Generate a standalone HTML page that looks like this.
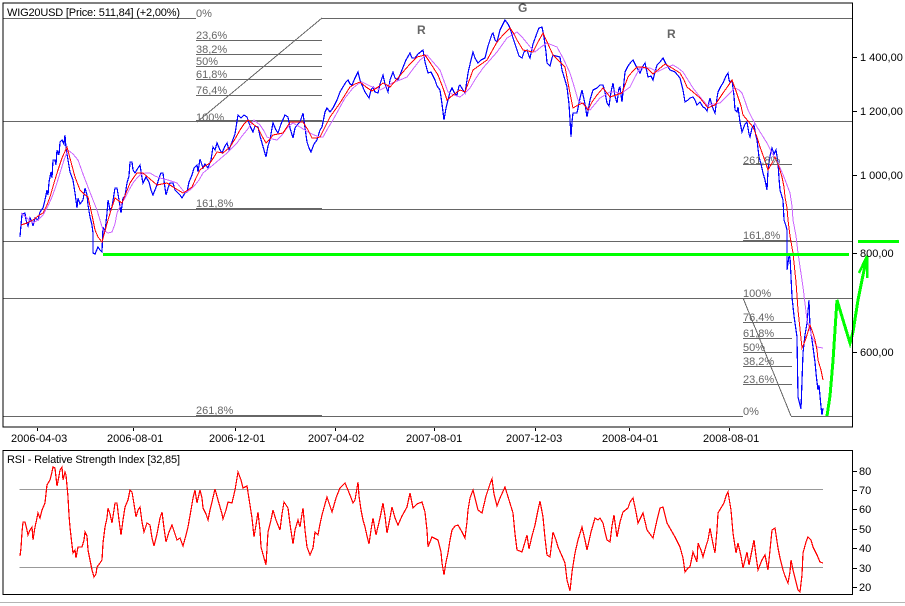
<!DOCTYPE html>
<html><head><meta charset="utf-8"><title>WIG20USD</title>
<style>
html,body{margin:0;padding:0;background:#fff;width:905px;height:606px;overflow:hidden}
svg{display:block}
text{font-family:"Liberation Sans",Arial,sans-serif;font-size:11px;fill:#000}
.f text{fill:#666}
.l line{stroke:#666;stroke-width:1}
.t line{stroke:#000;stroke-width:1}
polyline{fill:none}
</style></head><body>
<svg width="905" height="606" viewBox="0 0 905 606" xmlns="http://www.w3.org/2000/svg">
<g shape-rendering="crispEdges">
<g class="l">
<line x1="3" y1="18.5" x2="196" y2="18.5"/><line x1="322" y1="18.5" x2="852" y2="18.5"/>
<line x1="196" y1="40.5" x2="322" y2="40.5"/><line x1="196" y1="54.5" x2="322" y2="54.5"/>
<line x1="196" y1="66.5" x2="322" y2="66.5"/><line x1="196" y1="79.5" x2="322" y2="79.5"/>
<line x1="196" y1="95.5" x2="322" y2="95.5"/>
<line x1="3" y1="121.5" x2="852" y2="121.5"/>
<line x1="743" y1="164.5" x2="792" y2="164.5"/>
<line x1="3" y1="209.5" x2="852" y2="209.5"/>
<line x1="3" y1="241.5" x2="852" y2="241.5"/>
<line x1="3" y1="298.5" x2="852" y2="298.5"/>
<line x1="743" y1="322.5" x2="792" y2="322.5"/><line x1="743" y1="338.5" x2="792" y2="338.5"/>
<line x1="743" y1="352.5" x2="792" y2="352.5"/><line x1="743" y1="366.5" x2="792" y2="366.5"/>
<line x1="743" y1="384.5" x2="792" y2="384.5"/>
<line x1="3" y1="416.5" x2="196" y2="416.5"/><line x1="196" y1="416.5" x2="743" y2="416.5"/><line x1="791" y1="416.5" x2="852" y2="416.5"/>
</g>
<rect x="196" y="208" width="126" height="2" fill="#666"/>
<rect x="196" y="120" width="126" height="2" fill="#666"/>
<rect x="196" y="415" width="126" height="2" fill="#666"/>
<rect x="743" y="240" width="48" height="2" fill="#666"/>
</g>
<line x1="322" y1="18" x2="197" y2="122" stroke="#666" shape-rendering="crispEdges"/>
<line x1="743" y1="298" x2="791" y2="416" stroke="#666" shape-rendering="crispEdges"/>

<polyline shape-rendering="crispEdges" stroke="#0000ff" stroke-width="1.2" points="20,237 21,225 22,214 25,213 26,220 28,226 30,218 32,222 33,226 35,218 38,220 40,212 43,208 45,200 47,190 48,195 49,182 51,172 52,178 53,160 55,160 56,165 57,150 59,155 60,142 62,140 64,144 65,135 66,148 68,160 70,172 73,180 75,193 77,208 78,198 80,204 83,200 85,188 87,195 88,205 90,217 92,225 93,233 93,253 95,254 98,247 100,250 102,252 103,227 105,232 107,213 108,200 110,210 112,207 115,188 117,188 119,200 121,213 123,198 125,196 127,183 129,176 130,162 132,162 133,170 135,173 138,168 140,165 142,178 143,183 146,177 149,182 151,190 153,195 155,190 157,185 159,178 161,173 163,173 165,188 166,195 168,188 170,183 173,183 175,190 177,192 180,195 182,198 185,193 187,192 189,182 192,175 194,168 197,165 198,172 200,159 203,168 205,164 208,168 211,160 213,147 215,150 217,143 220,150 222,153 225,146 227,143 229,150 232,142 235,134 238,115 241,118 244,115 247,117 250,126 253,132 255,126 258,127 260,136 262,143 264,150 266,157 268,146 270,140 272,128 273,123 276,130 278,133 281,124 285,115 288,117 290,128 293,138 295,128 297,125 300,122 303,113 305,128 307,142 309,148 311,152 314,144 317,140 320,130 322,127 325,112 327,108 330,112 333,108 335,104 337,100 340,92 343,87 346,82 348,80 350,84 352,85 355,78 358,72 360,80 362,85 365,92 369,98 371,90 373,87 375,92 378,93 380,84 383,75 385,84 388,92 390,80 393,72 395,78 398,80 402,70 406,60 410,53 412,58 415,58 418,54 423,50 425,62 428,73 431,72 435,80 437,86 440,90 442,104 444,120 446,108 448,100 450,92 452,88 455,94 457,95 459,86 460,85 463,90 465,93 467,80 468,73 471,60 473,52 475,58 478,63 481,60 485,58 488,46 490,40 492,34 493,33 495,40 497,42 500,30 505,20 508,24 510,28 513,38 517,50 519,56 522,58 524,52 527,50 529,56 530,58 533,44 537,33 539,28 542,27 544,37 546,52 547,63 550,66 552,58 553,55 556,56 560,57 562,70 565,80 567,87 569,104 570,120 571,137 572,122 573,113 577,113 580,98 582,90 585,104 587,117 590,100 593,90 597,88 600,85 603,85 605,92 607,103 609,106 611,92 613,83 615,96 617,103 619,88 620,87 622,102 624,82 625,72 628,66 631,62 633,60 636,66 640,73 643,66 645,63 648,77 651,76 653,80 655,72 657,65 660,62 663,58 666,64 670,70 675,72 680,78 683,90 685,102 688,100 690,98 693,97 695,100 697,105 700,102 703,107 705,108 707,111 709,102 710,98 712,106 715,113 717,98 718,92 721,86 723,83 726,76 728,73 729,80 730,82 732,80 734,96 735,110 737,112 738,107 740,122 742,132 745,124 747,122 749,134 750,137 752,128 754,125 756,136 757,140 759,157 761,164 763,173 765,180 767,190 768,170 770,156 772,148 774,154 776,150 778,163 779,178 780,190 783,200 784,220 786,226 787,230 787,270 789,256 790,257 792,297 794,316 797,337 798,397 800,405 801,409 803,353 805,335 807,323 809,300 810,327 812,340 813,347 815,362 816,373 817,382 818,390 819,385 821,407 822,415 823,408"/>

<polyline shape-rendering="crispEdges" stroke="#cc66ff" stroke-width="1" points="21,213 27,218 33,223 38,220 43,215 48,206 52,197 56,186 60,173 64,160 68,150 73,154 78,160 83,174 88,187 93,200 97,210 100,220 103,230 108,233 112,232 115,224 117,213 121,204 125,198 129,190 133,183 137,178 140,175 145,173 150,173 155,176 160,178 168,180 177,183 181,188 185,193 190,190 195,185 199,180 203,173 208,169 213,165 220,159 227,153 232,148 237,143 242,136 247,130 254,120 260,125 264,131 267,137 272,139 277,140 282,135 287,128 290,125 293,123 300,127 308,132 314,135 320,137 323,137 328,128 333,120 339,109 345,98 349,93 353,88 358,84 362,82 370,86 380,90 386,87 392,83 400,80 407,77 413,69 420,60 424,57 427,55 433,62 440,70 444,81 448,92 454,95 460,97 465,93 470,88 476,78 483,68 490,60 497,52 502,45 507,38 512,35 517,32 522,37 527,43 531,48 535,52 541,47 547,43 552,45 557,47 563,58 570,73 574,86 578,100 584,105 590,110 595,104 600,98 605,95 610,92 615,92 620,93 622,93 626,90 630,87 635,77 640,68 645,68 650,68 654,70 657,72 665,68 673,65 678,68 683,72 688,80 693,88 700,97 707,105 714,104 720,103 727,96 735,88 739,90 742,93 745,101 748,110 752,118 757,127 762,135 767,143 772,153 778,163 784,177 790,193 792,206 793,220 796,236 798,253 803,287 807,320 810,330 812,337 815,343 817,347 823,348"/>

<polyline shape-rendering="crispEdges" stroke="#ff0000" stroke-width="1" points="21,225 27,223 33,220 38,216 43,213 47,205 50,197 54,183 58,170 62,158 67,147 71,162 75,177 80,190 84,194 88,197 92,215 95,230 98,237 102,242 105,231 108,220 112,207 115,198 119,201 122,203 126,193 130,183 134,177 137,173 143,173 150,179 157,185 162,184 167,183 173,187 178,190 183,193 188,190 192,187 196,178 200,170 205,166 210,163 214,157 217,152 223,153 230,147 235,139 240,130 244,124 248,120 253,124 258,128 262,136 266,143 270,139 273,135 278,134 283,133 287,127 290,122 296,122 303,122 308,130 312,138 316,138 320,137 325,127 330,117 335,110 340,103 345,95 350,87 355,84 360,82 366,87 372,91 378,87 383,83 387,85 390,87 397,79 403,72 410,64 417,57 421,56 425,55 431,64 438,75 443,88 447,100 453,95 460,90 465,92 469,81 473,70 480,65 487,60 492,51 497,42 503,35 510,28 514,34 517,40 520,45 523,50 528,51 533,52 538,42 543,33 548,44 553,55 559,61 565,67 569,88 573,108 578,105 583,103 588,110 592,102 597,95 603,88 607,93 610,97 616,95 622,93 625,85 628,77 632,72 637,67 642,67 647,68 650,71 653,74 659,69 665,64 672,68 680,73 684,80 687,87 693,92 700,98 704,103 708,108 712,106 715,105 719,99 723,93 728,86 732,80 735,88 738,97 741,106 743,115 748,121 753,127 757,137 760,147 764,158 768,170 772,163 775,157 779,167 782,177 784,187 785,197 787,208 788,220 790,236 793,253 796,282 798,310 800,329 802,348 805,341 807,335 810,325 813,333 815,340 817,350 818,360 821,370 823,380"/>

<polyline shape-rendering="crispEdges" stroke="#00ff00" stroke-width="3" points="103,254.5 849,254.5"/>
<polyline shape-rendering="crispEdges" stroke="#00ff00" stroke-width="3" points="858,241.5 899,241.5"/>
<polyline shape-rendering="crispEdges" stroke="#00ff00" stroke-width="3" points="827,416 830,396 833,361 835,330 837,300 843,320 850,343 853,332 858,300 862,280 867,256"/>
<polyline shape-rendering="crispEdges" stroke="#00ff00" stroke-width="2.5" points="859,273 867,256 867,278"/>

<polyline shape-rendering="crispEdges" points="19.5,489.5 823,489.5" stroke="#999"/>
<polyline shape-rendering="crispEdges" points="19.5,567.5 823,567.5" stroke="#999"/>
<polyline shape-rendering="crispEdges" stroke="#ff0000" stroke-width="1.2" points="20,556 21,548 22,532 23,522 25,522 27,530 28,535 30,530 32,527 33,540 35,527 37,518 38,513 40,518 42,510 45,503 47,485 50,480 52,472 53,467 55,468 57,486 59,476 60,470 62,467 63,480 65,472 66,475 68,497 69,515 70,527 72,545 73,553 75,550 76,558 78,547 82,547 84,540 85,532 87,536 88,550 90,560 92,570 94,577 96,574 97,567 100,563 102,560 103,543 105,527 107,518 108,508 110,514 112,523 114,510 115,503 117,503 119,520 121,535 123,520 125,507 128,500 130,490 132,492 134,504 136,517 138,510 140,507 142,522 144,532 147,523 150,525 152,538 154,546 157,534 160,518 162,512 164,528 166,542 169,532 172,525 175,534 177,540 180,538 183,546 186,535 188,527 191,510 193,498 195,490 197,503 200,490 202,498 203,508 206,514 208,520 210,510 212,502 215,489 218,500 220,507 222,514 223,519 226,510 228,502 232,503 235,490 238,472 241,480 243,488 247,486 250,505 252,518 254,537 256,525 258,512 260,530 261,547 264,558 266,565 268,532 271,520 273,510 276,520 280,530 282,514 284,502 288,508 290,524 293,544 295,530 298,520 300,527 302,514 303,508 305,530 307,547 310,555 313,548 315,532 318,535 320,524 322,515 325,504 327,497 330,506 332,512 336,498 340,488 345,483 348,490 350,495 353,503 355,500 358,482 359,496 361,510 363,520 365,527 367,536 369,544 371,530 373,518 376,535 380,518 383,503 385,516 387,533 390,518 392,507 395,518 398,525 402,516 407,507 410,493 413,508 417,504 422,502 425,512 427,530 428,547 432,537 438,540 441,552 442,563 444,575 446,562 448,553 450,540 452,530 455,526 458,525 462,532 465,538 467,522 468,510 470,498 473,490 476,502 478,510 482,513 486,496 490,484 492,479 494,494 497,506 500,498 505,487 509,500 513,513 515,534 517,550 522,552 525,542 527,535 529,549 532,536 535,525 538,510 540,501 543,517 545,538 547,555 550,557 553,532 556,540 558,547 562,556 565,563 567,580 570,591 572,572 575,553 578,540 582,527 585,540 587,550 591,532 595,518 598,520 600,518 603,523 605,532 607,540 610,542 612,526 614,515 617,537 620,522 623,512 628,508 630,502 633,498 636,512 638,523 643,513 647,530 650,534 653,538 657,520 660,508 663,507 667,523 671,530 675,537 680,547 683,558 685,572 688,568 690,567 693,552 697,562 698,543 701,550 703,557 706,546 708,540 710,528 713,544 715,553 717,530 718,513 721,508 724,503 726,496 728,492 730,504 731,510 733,533 736,553 738,543 741,556 743,568 747,552 749,565 752,550 754,540 756,556 758,570 762,560 765,555 768,570 770,550 772,530 775,528 778,548 780,558 783,570 785,576 788,583 790,572 791,560 793,570 795,578 798,590 800,592 802,575 803,553 806,542 808,537 811,540 813,547 817,555 820,562 823,563"/>

<g shape-rendering="crispEdges">
<rect x="3" y="3" width="849.5" height="424" fill="none" stroke="#000" stroke-width="1.4"/>
<rect x="3" y="450.5" width="849.5" height="144" fill="none" stroke="#000" stroke-width="1.4"/>
<line x1="0" y1="602.5" x2="905" y2="602.5" stroke="#b4b4b4"/>
<g class="t">
<line x1="853" y1="57.5" x2="857" y2="57.5"/><line x1="853" y1="111.5" x2="857" y2="111.5"/>
<line x1="853" y1="175.5" x2="857" y2="175.5"/><line x1="853" y1="253.5" x2="857" y2="253.5"/>
<line x1="853" y1="352.5" x2="857" y2="352.5"/>
<line x1="853" y1="471.5" x2="857" y2="471.5"/><line x1="853" y1="490.5" x2="857" y2="490.5"/>
<line x1="853" y1="509.5" x2="857" y2="509.5"/><line x1="853" y1="529.5" x2="857" y2="529.5"/>
<line x1="853" y1="548.5" x2="857" y2="548.5"/><line x1="853" y1="568.5" x2="857" y2="568.5"/>
<line x1="853" y1="587.5" x2="857" y2="587.5"/>
<line x1="37.5" y1="428" x2="37.5" y2="431"/><line x1="133.5" y1="428" x2="133.5" y2="431"/>
<line x1="235.5" y1="428" x2="235.5" y2="431"/><line x1="335.5" y1="428" x2="335.5" y2="431"/>
<line x1="434.5" y1="428" x2="434.5" y2="431"/><line x1="535.5" y1="428" x2="535.5" y2="431"/>
<line x1="629.5" y1="428" x2="629.5" y2="431"/><line x1="729.5" y1="428" x2="729.5" y2="431"/>
</g>
</g>

<text x="7" y="16" textLength="173" lengthAdjust="spacing">WIG20USD [Price: 511,84] (+2,00%)</text>
<text x="7" y="463" textLength="173" lengthAdjust="spacing">RSI - Relative Strength Index [32,85]</text>

<g class="f">
<text x="196" y="17">0%</text><text x="196" y="39">23,6%</text><text x="196" y="53">38,2%</text>
<text x="196" y="65">50%</text><text x="196" y="78">61,8%</text><text x="196" y="94">76,4%</text>
<text x="196" y="121">100%</text><text x="196" y="207">161,8%</text><text x="196" y="414">261,8%</text>
<text x="743" y="164">261,8%</text><text x="743" y="239">161,8%</text><text x="743" y="297">100%</text>
<text x="743" y="321">76,4%</text><text x="743" y="337">61,8%</text><text x="743" y="351">50%</text>
<text x="743" y="365">38,2%</text><text x="743" y="383">23,6%</text><text x="743" y="415">0%</text>
<text x="417" y="34" style="font-size:12px;font-weight:bold">R</text>
<text x="518" y="12" style="font-size:12px;font-weight:bold">G</text>
<text x="667" y="38" style="font-size:12px;font-weight:bold">R</text>
</g>

<text x="860" y="61">1 400,00</text><text x="860" y="115">1 200,00</text><text x="860" y="179">1 000,00</text>
<text x="860" y="257">800,00</text><text x="860" y="356">600,00</text>
<text x="859" y="475">80</text><text x="859" y="494">70</text><text x="859" y="513">60</text>
<text x="859" y="533">50</text><text x="859" y="552">40</text><text x="859" y="572">30</text><text x="859" y="591">20</text>

<text x="11" y="442">2006-04-03</text><text x="107" y="442">2006-08-01</text><text x="209" y="442">2006-12-01</text>
<text x="308" y="442">2007-04-02</text><text x="406" y="442">2007-08-01</text><text x="506" y="442">2007-12-03</text>
<text x="602" y="442">2008-04-01</text><text x="703" y="442">2008-08-01</text>
</svg>
</body></html>
